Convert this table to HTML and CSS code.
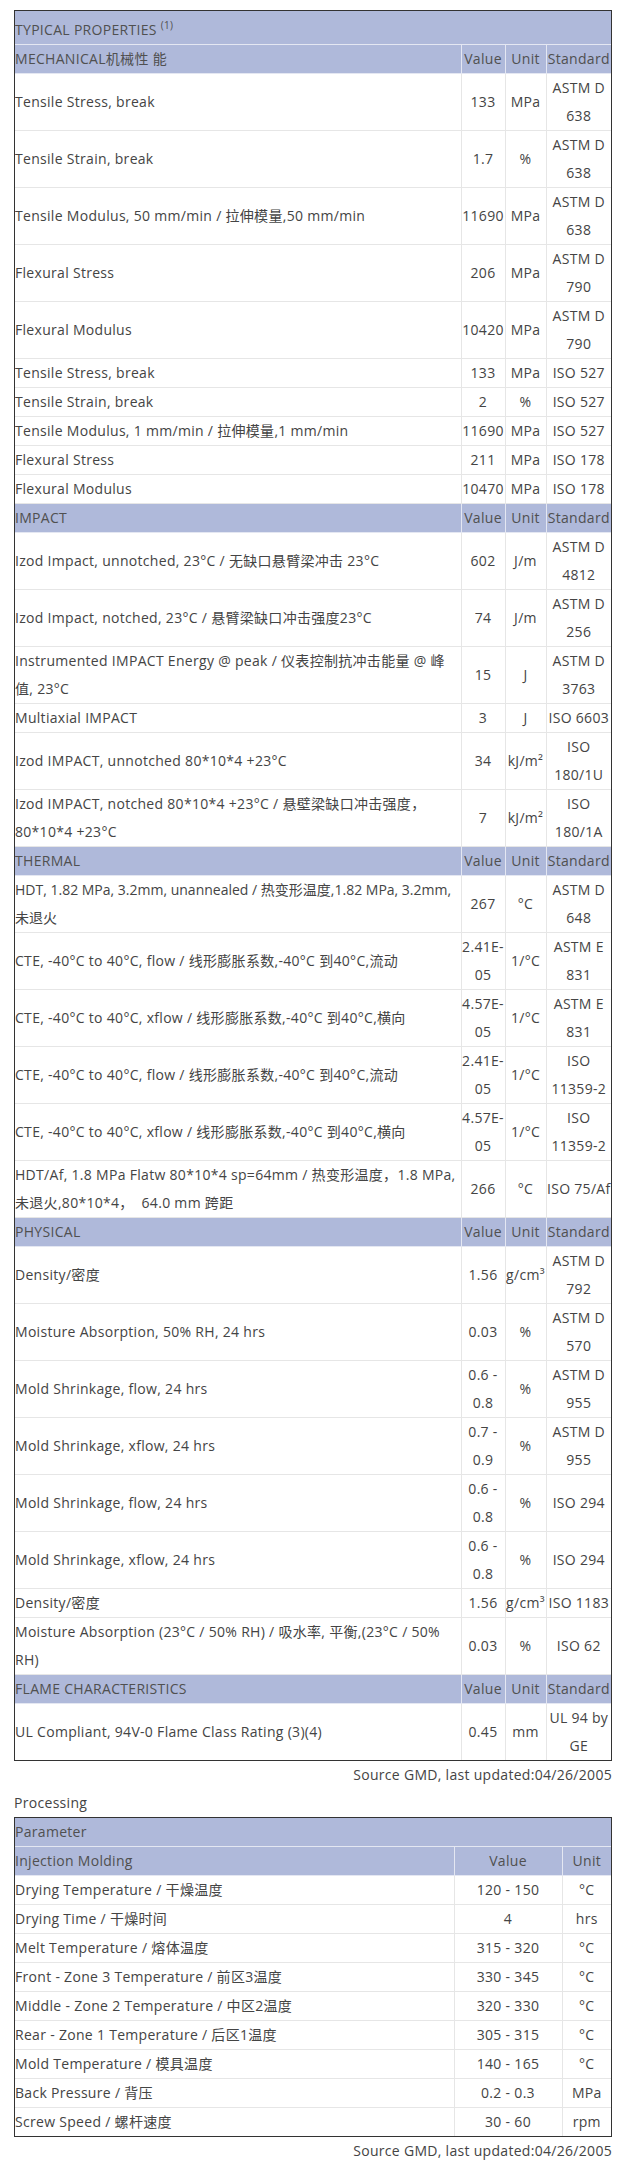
FILE: index.html
```html
<!DOCTYPE html>
<html lang="en">
<head>
<meta charset="utf-8">
<title>Typical Properties</title>
<link rel="stylesheet" href="styles.css">
</head>
<body>
<div class="page">
  <div class="frame">
    <table class="props">
      <colgroup>
        <col class="c-label"><col class="c-value"><col class="c-unit"><col class="c-std">
      </colgroup>
      <tr class="head top"><th colspan="4" class="l">TYPICAL PROPERTIES <sup>(1)</sup></th></tr>
      <tr class="head"><th class="l">MECHANICAL机械性 能</th><th>Value</th><th>Unit</th><th>Standard</th></tr>
      <tr><td class="l">Tensile Stress, break</td><td>133</td><td>MPa</td><td>ASTM D 638</td></tr>
      <tr><td class="l">Tensile Strain, break</td><td>1.7</td><td>%</td><td>ASTM D 638</td></tr>
      <tr><td class="l">Tensile Modulus, 50 mm/min / 拉伸模量,50 mm/min</td><td>11690</td><td>MPa</td><td>ASTM D 638</td></tr>
      <tr><td class="l">Flexural Stress</td><td>206</td><td>MPa</td><td>ASTM D 790</td></tr>
      <tr><td class="l">Flexural Modulus</td><td>10420</td><td>MPa</td><td>ASTM D 790</td></tr>
      <tr><td class="l">Tensile Stress, break</td><td>133</td><td>MPa</td><td>ISO 527</td></tr>
      <tr><td class="l">Tensile Strain, break</td><td>2</td><td>%</td><td>ISO 527</td></tr>
      <tr><td class="l">Tensile Modulus, 1 mm/min / 拉伸模量,1 mm/min</td><td>11690</td><td>MPa</td><td>ISO 527</td></tr>
      <tr><td class="l">Flexural Stress</td><td>211</td><td>MPa</td><td>ISO 178</td></tr>
      <tr><td class="l">Flexural Modulus</td><td>10470</td><td>MPa</td><td>ISO 178</td></tr>

      <tr class="head"><th class="l">IMPACT</th><th>Value</th><th>Unit</th><th>Standard</th></tr>
      <tr><td class="l">Izod Impact, unnotched, 23°C / 无缺口悬臂梁冲击 23°C</td><td>602</td><td>J/m</td><td>ASTM D 4812</td></tr>
      <tr><td class="l">Izod Impact, notched, 23°C / 悬臂梁缺口冲击强度23°C</td><td>74</td><td>J/m</td><td>ASTM D 256</td></tr>
      <tr><td class="l">Instrumented IMPACT Energy @ peak / 仪表控制抗冲击能量 @ 峰值, 23°C</td><td>15</td><td>J</td><td>ASTM D 3763</td></tr>
      <tr><td class="l">Multiaxial IMPACT</td><td>3</td><td>J</td><td>ISO 6603</td></tr>
      <tr><td class="l">Izod IMPACT, unnotched 80*10*4 +23°C</td><td>34</td><td>kJ/m²</td><td>ISO 180/1U</td></tr>
      <tr><td class="l">Izod IMPACT, notched 80*10*4 +23°C / 悬壁梁缺口冲击强度，80*10*4 +23°C</td><td>7</td><td>kJ/m²</td><td>ISO 180/1A</td></tr>

      <tr class="head"><th class="l">THERMAL</th><th>Value</th><th>Unit</th><th>Standard</th></tr>
      <tr><td class="l tight">HDT, 1.82 MPa, 3.2mm, unannealed / 热变形温度,1.82 MPa, 3.2mm, 未退火</td><td>267</td><td>°C</td><td>ASTM D 648</td></tr>
      <tr><td class="l">CTE, -40°C to 40°C, flow / 线形膨胀系数,-40°C 到40°C,流动</td><td>2.41E-<wbr>05</td><td>1/°C</td><td>ASTM E 831</td></tr>
      <tr><td class="l">CTE, -40°C to 40°C, xflow / 线形膨胀系数,-40°C 到40°C,横向</td><td>4.57E-<wbr>05</td><td>1/°C</td><td>ASTM E 831</td></tr>
      <tr><td class="l">CTE, -40°C to 40°C, flow / 线形膨胀系数,-40°C 到40°C,流动</td><td>2.41E-<wbr>05</td><td>1/°C</td><td>ISO 11359-2</td></tr>
      <tr><td class="l">CTE, -40°C to 40°C, xflow / 线形膨胀系数,-40°C 到40°C,横向</td><td>4.57E-<wbr>05</td><td>1/°C</td><td>ISO 11359-2</td></tr>
      <tr><td class="l">HDT/Af, 1.8 MPa Flatw 80*10*4 sp=64mm / 热变形温度，1.8 MPa, 未退火,80*10*4，&nbsp;&nbsp;64.0 mm 跨距</td><td>266</td><td>°C</td><td>ISO 75/Af</td></tr>

      <tr class="head"><th class="l">PHYSICAL</th><th>Value</th><th>Unit</th><th>Standard</th></tr>
      <tr><td class="l">Density/密度</td><td>1.56</td><td>g/cm³</td><td>ASTM D 792</td></tr>
      <tr><td class="l">Moisture Absorption, 50% RH, 24 hrs</td><td>0.03</td><td>%</td><td>ASTM D 570</td></tr>
      <tr><td class="l">Mold Shrinkage, flow, 24 hrs</td><td>0.6 - 0.8</td><td>%</td><td>ASTM D 955</td></tr>
      <tr><td class="l">Mold Shrinkage, xflow, 24 hrs</td><td>0.7 - 0.9</td><td>%</td><td>ASTM D 955</td></tr>
      <tr><td class="l">Mold Shrinkage, flow, 24 hrs</td><td>0.6 - 0.8</td><td>%</td><td>ISO 294</td></tr>
      <tr><td class="l">Mold Shrinkage, xflow, 24 hrs</td><td>0.6 - 0.8</td><td>%</td><td>ISO 294</td></tr>
      <tr><td class="l">Density/密度</td><td>1.56</td><td>g/cm³</td><td>ISO 1183</td></tr>
      <tr><td class="l">Moisture Absorption (23°C / 50% RH) / 吸水率, 平衡,(23°C / 50% RH)</td><td>0.03</td><td>%</td><td>ISO 62</td></tr>

      <tr class="head"><th class="l">FLAME CHARACTERISTICS</th><th>Value</th><th>Unit</th><th>Standard</th></tr>
      <tr><td class="l">UL Compliant, 94V-0 Flame Class Rating (3)(4)</td><td>0.45</td><td>mm</td><td>UL 94 by GE</td></tr>
    </table>
  </div>
  <p class="source">Source GMD, last updated:04/26/2005</p>

  <p class="section">Processing</p>
  <div class="frame">
    <table class="proc">
      <colgroup>
        <col class="p-label"><col class="p-value"><col class="p-unit">
      </colgroup>
      <tr class="head"><th colspan="3" class="l">Parameter</th></tr>
      <tr class="head"><th class="l">Injection Molding</th><th>Value</th><th>Unit</th></tr>
      <tr><td class="l">Drying Temperature / 干燥温度</td><td>120 - 150</td><td>°C</td></tr>
      <tr><td class="l">Drying Time / 干燥时间</td><td>4</td><td>hrs</td></tr>
      <tr><td class="l">Melt Temperature / 熔体温度</td><td>315 - 320</td><td>°C</td></tr>
      <tr><td class="l">Front - Zone 3 Temperature / 前区3温度</td><td>330 - 345</td><td>°C</td></tr>
      <tr><td class="l">Middle - Zone 2 Temperature / 中区2温度</td><td>320 - 330</td><td>°C</td></tr>
      <tr><td class="l">Rear - Zone 1 Temperature / 后区1温度</td><td>305 - 315</td><td>°C</td></tr>
      <tr><td class="l">Mold Temperature / 模具温度</td><td>140 - 165</td><td>°C</td></tr>
      <tr><td class="l">Back Pressure / 背压</td><td>0.2 - 0.3</td><td>MPa</td></tr>
      <tr><td class="l">Screw Speed / 螺杆速度</td><td>30 - 60</td><td>rpm</td></tr>
    </table>
  </div>
  <p class="source">Source GMD, last updated:04/26/2005</p>
</div>
</body>
</html>
```
FILE: styles.css
```css
html, body {
  margin: 0;
  padding: 0;
  background: #ffffff;
}
body {
  font-family: "Open Sans", "Noto Sans CJK SC", sans-serif;
  font-size: 14px;
  line-height: 28px;
  letter-spacing: 0.3px;
  color: #444444;
}
.page {
  width: 598px;
  padding: 10px 0 0 14px;
}
.frame {
  border: 1px solid #333333;
}
table {
  width: 596px;
  border-collapse: collapse;
  border-style: hidden;
  table-layout: fixed;
}
th, td {
  padding: 0;
  border: 1px solid #e6e6e6;
  text-align: center;
  vertical-align: middle;
  font-weight: normal;
}
.head th {
  background: #afb9da;
  color: #505050;
  border-color: #e4e7f2;
}
th.l, td.l {
  text-align: left;
}
td.tight {
  letter-spacing: 0;
}
.top th {
  padding-top: 5px;
}
sup {
  font-size: 10px;
  line-height: 0;
  vertical-align: 6px;
}
.c-label { width: 446px; }
.c-value { width: 44px; }
.c-unit { width: 41px; }
.c-std { width: 65px; }
.p-label { width: 439px; }
.p-value { width: 108px; }
.p-unit { width: 49px; }
.source {
  margin: 0;
  text-align: right;
}
.section {
  margin: 0;
}
```
